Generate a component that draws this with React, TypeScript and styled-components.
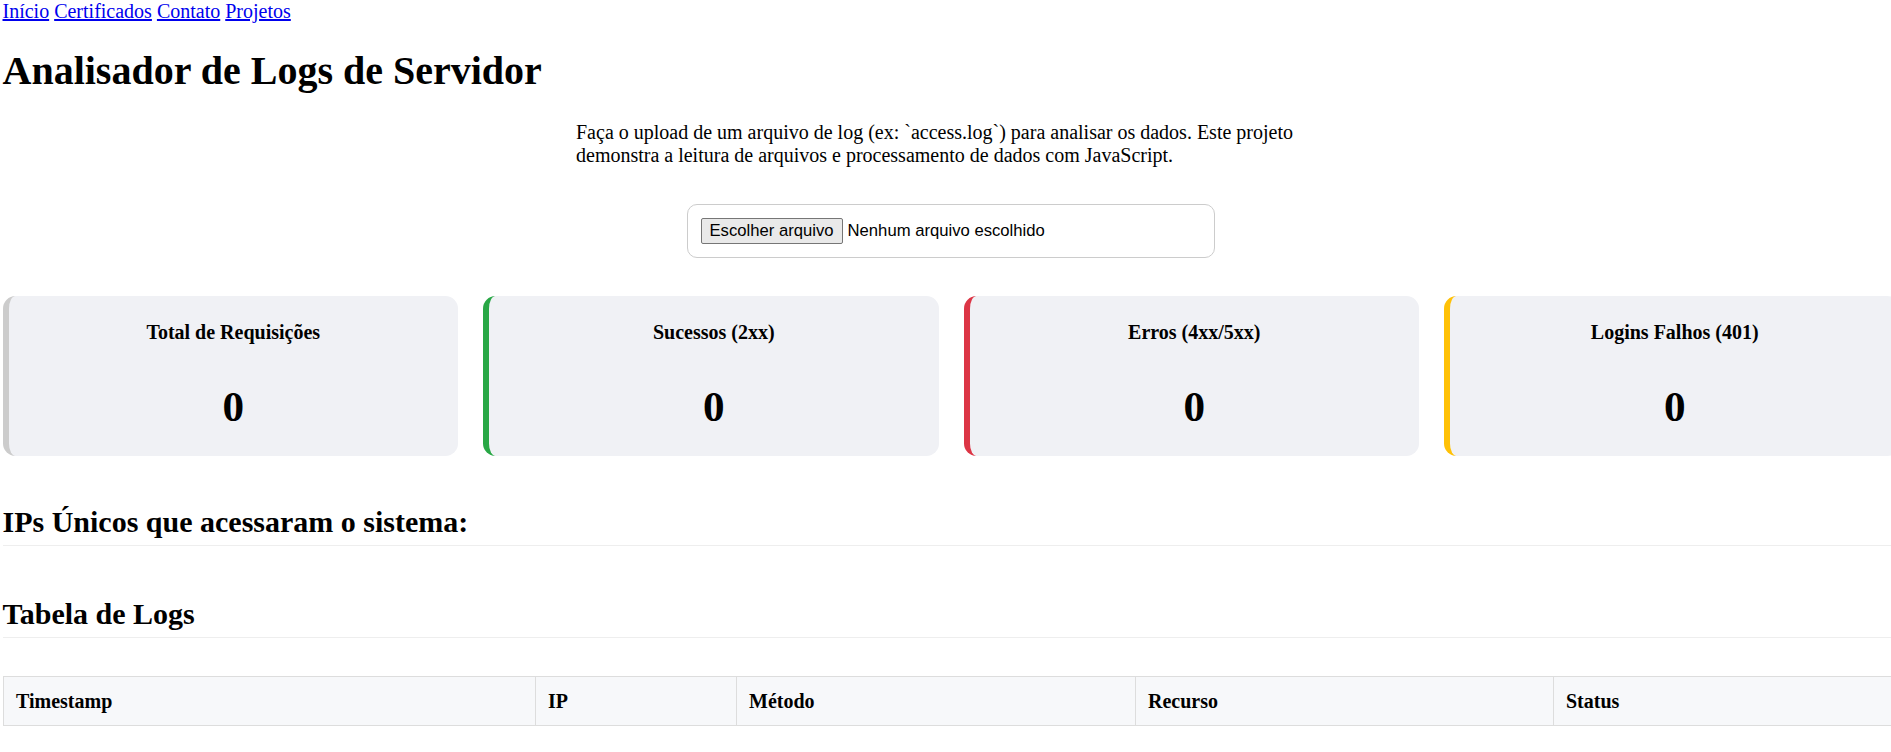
import React from "react";
import styled, { createGlobalStyle } from "styled-components";

const Global = createGlobalStyle`
  html, body {
    margin: 0;
    padding: 0;
    overflow-x: hidden;
    background: #ffffff;
  }
  body {
    font-family: "Liberation Serif", "Times New Roman", serif;
    font-size: 20px;
    color: #000000;
  }
`;

const Page = styled.div`
  width: 1897px;
  padding-left: 2.5px;
`;

const Nav = styled.nav`
  line-height: 23px;
  font-size: 20px;
`;

const NavLink = styled.a`
  color: #0000ee;
  text-decoration: underline;
`;

const Title = styled.h1`
  margin: 24.5px 0 0;
  font-size: 40px;
  line-height: 46px;
  font-weight: 700;
`;

const Intro = styled.p`
  width: 750px;
  margin: 27.8px auto 0;
  font-size: 20px;
  line-height: 23px;
`;

const UploadBox = styled.div`
  box-sizing: border-box;
  width: 528px;
  margin: 37px auto 0;
  padding: 12.5px;
  border: 1px solid #cccccc;
  border-radius: 10px;
  display: flex;
  align-items: center;
  gap: 5px;
  font-family: "Liberation Sans", Arial, sans-serif;
  font-size: 16.67px;
`;

const FileButton = styled.button`
  box-sizing: border-box;
  height: 26.5px;
  padding: 0 8px;
  border: 1px solid #767676;
  border-radius: 2px;
  background: #e9e9e9;
  color: #000;
  font-family: "Liberation Sans", Arial, sans-serif;
  font-size: 16.67px;
  line-height: 24px;
`;

const FileLabel = styled.span`
  color: #000;
  line-height: 26px;
`;

const Cards = styled.div`
  margin-top: 38px;
  display: grid;
  grid-template-columns: repeat(4, 455.5px);
  gap: 25px;
`;

const Card = styled.div<{ $accent: string }>`
  box-sizing: border-box;
  height: 160px;
  padding: 25.5px 0 23.5px;
  background: #f0f1f5;
  border-left: 6.25px solid ${(p) => p.$accent};
  border-radius: 12.5px;
  display: flex;
  flex-direction: column;
  align-items: center;
`;

const CardTitle = styled.h4`
  margin: 0;
  font-size: 20px;
  line-height: 23px;
  font-weight: 700;
`;

const CardValue = styled.div`
  margin-top: 38px;
  font-size: 43.2px;
  line-height: 50px;
  font-weight: 700;
`;

const SectionTitle = styled.h2<{ $top: number }>`
  margin: ${(p) => p.$top}px 0 0;
  padding-bottom: 6.25px;
  border-bottom: 1px solid #eeeeee;
  font-size: 30px;
  line-height: 34px;
  font-weight: 700;
`;

const IpList = styled.div``;

const Table = styled.table`
  margin-top: 38px;
  width: 1897px;
  border-collapse: collapse;
  table-layout: fixed;
`;

const Th = styled.th<{ $w: number }>`
  width: ${(p) => p.$w}px;
  box-sizing: border-box;
  padding: 12.5px;
  border: 1px solid #dddddd;
  background: #f7f8fa;
  text-align: left;
  font-size: 20px;
  line-height: 23px;
  font-weight: 700;
`;

const links = ["Início", "Certificados", "Contato", "Projetos"];

const stats = [
  { label: "Total de Requisições", color: "#cccccc" },
  { label: "Sucessos (2xx)", color: "#28a745" },
  { label: "Erros (4xx/5xx)", color: "#dc3545" },
  { label: "Logins Falhos (401)", color: "#ffc107" },
];

const columns = [
  { label: "Timestamp", w: 532 },
  { label: "IP", w: 201 },
  { label: "Método", w: 399 },
  { label: "Recurso", w: 418 },
  { label: "Status", w: 347 },
];

export default function App() {
  return (
    <Page>
      <Global />
      <Nav>
        {links.map((l, i) => (
          <React.Fragment key={l}>
            {i > 0 && " "}
            <NavLink href="#">{l}</NavLink>
          </React.Fragment>
        ))}
      </Nav>
      <Title>Analisador de Logs de Servidor</Title>
      <Intro>
        Faça o upload de um arquivo de log (ex: `access.log`) para analisar os
        dados. Este projeto demonstra a leitura de arquivos e processamento de
        dados com JavaScript.
      </Intro>
      <UploadBox>
        <FileButton type="button">Escolher arquivo</FileButton>
        <FileLabel>Nenhum arquivo escolhido</FileLabel>
      </UploadBox>
      <Cards>
        {stats.map((s) => (
          <Card key={s.label} $accent={s.color}>
            <CardTitle>{s.label}</CardTitle>
            <CardValue>0</CardValue>
          </Card>
        ))}
      </Cards>
      <SectionTitle $top={49.4}>IPs Únicos que acessaram o sistema:</SectionTitle>
      <IpList />
      <SectionTitle $top={50.6}>Tabela de Logs</SectionTitle>
      <Table>
        <thead>
          <tr>
            {columns.map((c) => (
              <Th key={c.label} $w={c.w}>
                {c.label}
              </Th>
            ))}
          </tr>
        </thead>
        <tbody />
      </Table>
    </Page>
  );
}
